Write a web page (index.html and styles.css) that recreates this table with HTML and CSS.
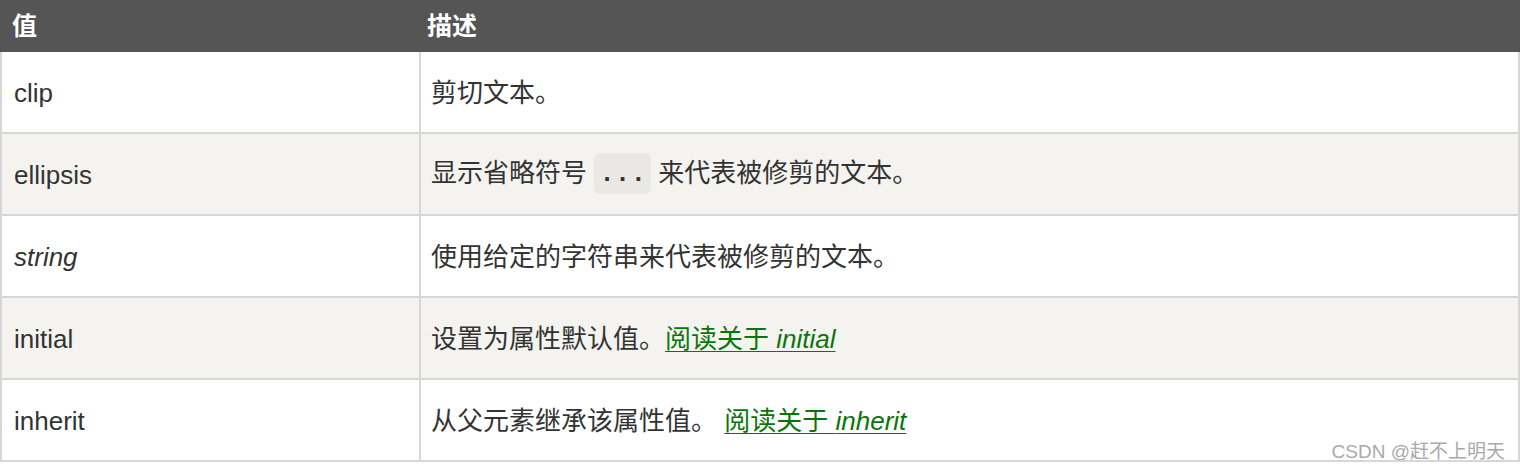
FILE: index.html
```html
<!DOCTYPE html>
<html lang="zh-CN">
<head>
<meta charset="utf-8">
<title>text-overflow</title>
<link rel="stylesheet" href="styles.css">
</head>
<body>
<div class="wrap">
<table class="ref">
  <thead>
    <tr><th class="c1">值</th><th class="c2">描述</th></tr>
  </thead>
  <tbody>
    <tr><td class="c1">clip</td><td class="c2">剪切文本。</td></tr>
    <tr class="alt"><td class="c1">ellipsis</td><td class="c2">显示省略符号 <code class="code">...</code> 来代表被修剪的文本。</td></tr>
    <tr><td class="c1"><em>string</em></td><td class="c2">使用给定的字符串来代表被修剪的文本。</td></tr>
    <tr class="alt"><td class="c1">initial</td><td class="c2">设置为属性默认值。<a class="lnk" href="#">阅读关于 <em>initial</em></a></td></tr>
    <tr><td class="c1">inherit</td><td class="c2">从父元素继承该属性值。 <a class="lnk" href="#">阅读关于 <em>inherit</em></a></td></tr>
  </tbody>
</table>
<div class="mark">CSDN @赶不上明天</div>
</div>
</body>
</html>
```

FILE: styles.css
```css
html, body {
  margin: 0;
  padding: 0;
  background: #ffffff;
}
.wrap {
  position: relative;
  width: 1520px;
  height: 472px;
}
.ref {
  width: 1520px;
  border-collapse: separate;
  border-spacing: 0;
  table-layout: fixed;
  font-family: "Liberation Sans", "Noto Sans CJK SC", sans-serif;
  font-size: 26px;
  color: #333333;
}
.ref th {
  background: #555555;
  color: #ffffff;
  font-weight: bold;
  font-size: 25px;
  text-align: left;
  height: 52px;
  padding: 0;
  vertical-align: middle;
  line-height: 1;
}
.ref th.c1 { width: 409px; padding-left: 12px; }
.ref th.c2 { padding-left: 6px; }
.ref td {
  height: 82px;
  padding: 3px 0 0 0;
  box-sizing: border-box;
  vertical-align: middle;
  border-bottom: 2px solid #d6d6d6;
  border-right: 2px solid #d6d6d6;
  line-height: 1.2;
}
.ref td.c1 {
  border-left: 2px solid #d6d6d6;
  padding-left: 12px;
}
.ref td.c2 { padding-left: 10px; }
.ref tr.alt td { background: #f4f3f0; }
.code {
  display: inline-block;
  font-family: "Liberation Mono", monospace;
  font-weight: bold;
  font-size: 26px;
  background: #e9e8e4;
  border-radius: 6px;
  padding: 9px 5px 8px;
  line-height: 24px;
  vertical-align: middle;
  margin-top: -4px;
}
.lnk {
  color: #0a750a;
  text-decoration: underline;
  text-decoration-thickness: 1px;
  text-underline-offset: 3px;
}
.mark {
  position: absolute;
  right: 15px;
  bottom: 9px;
  font-family: "Liberation Sans", "Noto Sans CJK SC", sans-serif;
  font-size: 19px;
  color: #a9a9a9;
}
```
